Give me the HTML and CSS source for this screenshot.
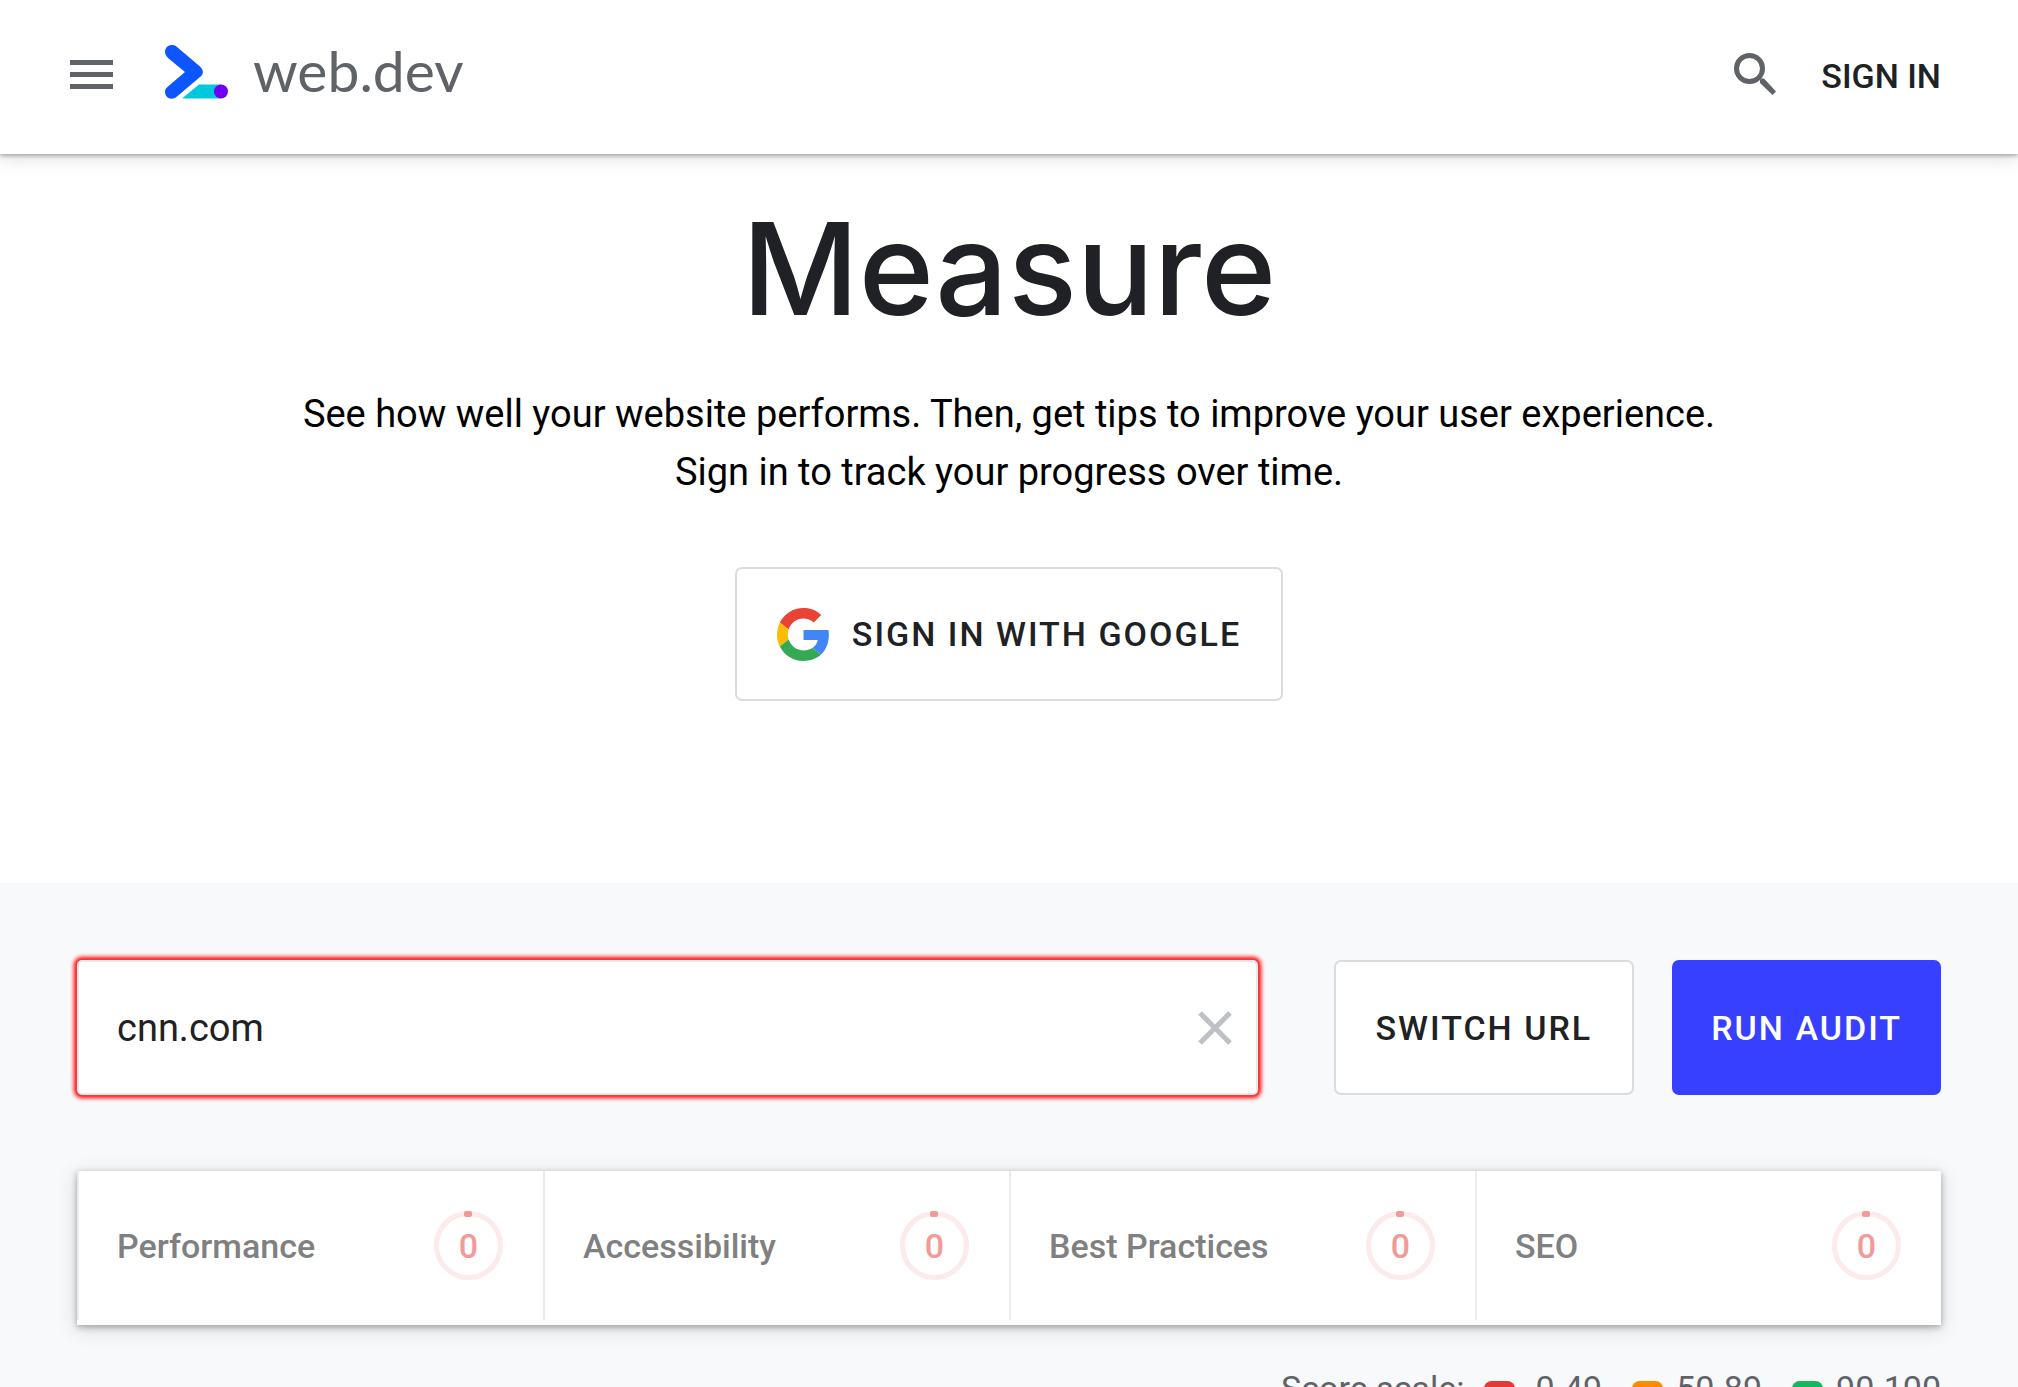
FILE: index.html
```html
<!DOCTYPE html>
<html lang="en">
<head>
<meta charset="utf-8">
<meta name="viewport" content="width=device-width, initial-scale=1">
<title>Measure</title>
<link rel="stylesheet" href="styles.css">
</head>
<body>
<header class="header">
  <button class="icon-button" type="button" aria-label="Open menu">
    <svg class="menu-icon" viewBox="0 0 43 29" aria-hidden="true"><path d="M0 0h43v5H0zM0 12h43v5H0zM0 24h43v5H0z"/></svg>
  </button>
  <a class="brand" href="/">
    <svg class="brand-mark" viewBox="0 0 63 54" aria-hidden="true">
      <path fill="#00c9db" d="M34 39.500H56V53.500H17z"/>
      <path fill="#0d56ff" d="M0 7C0 0 8 -2 12 2L35 21.500Q41 27 35 32L12 51.500C8 55.500 0 54 0 46.500Q0 43.500 3 41.500L20 27L3 13Q0 10.500 0 7z"/>
      <circle cx="56" cy="46.500" r="7" fill="#6e00f5"/>
    </svg>
    <span class="brand-name">web.dev</span>
  </a>
  <button class="icon-button" type="button" aria-label="Search">
    <svg class="search-icon" viewBox="0 0 42 42" aria-hidden="true"><circle cx="15.500" cy="15.500" r="13" fill="none" stroke="#5f6368" stroke-width="5"/><path d="M26 30v-3.500l1-1h3L42 38.500 38.500 42z"/></svg>
  </button>
  <a class="header-link" href="/signin">SIGN IN</a>
</header>
<main>
  <section class="hero">
    <h1 class="hero-title">Measure</h1>
    <p class="hero-text">See how well your website performs. Then, get tips to improve your user experience.<br>Sign in to track your progress over time.</p>
    <button class="button button-google" type="button">
      <svg class="google-icon" viewBox="0 0 48 48" aria-hidden="true">
        <path fill="#ea4335" d="M24 9.500c3.540 0 6.710 1.220 9.210 3.600l6.850-6.850C35.900 2.380 30.470 0 24 0 14.620 0 6.510 5.380 2.560 13.220l7.980 6.190C12.430 13.720 17.740 9.500 24 9.500z"/>
        <path fill="#4285f4" d="M46.980 24.550c0-1.570-.15-3.090-.38-4.550H24v9.020h12.940c-.58 2.960-2.260 5.480-4.780 7.180l7.730 6c4.510-4.180 7.090-10.360 7.090-17.650z"/>
        <path fill="#fbbc05" d="M10.530 28.590A14.500 14.500 0 0 1 9.770 24c0-1.600.27-3.140.76-4.590l-7.980-6.190A23.900 23.900 0 0 0 0 24c0 3.880.92 7.540 2.560 10.780z"/>
        <path fill="#34a853" d="M24 48c6.480 0 11.930-2.130 15.890-5.810l-7.730-6c-2.150 1.450-4.920 2.300-8.160 2.300-6.260 0-11.570-4.220-13.470-9.910l-7.980 6.190C6.510 42.620 14.620 48 24 48z"/>
      </svg>
      <span>SIGN IN WITH GOOGLE</span>
    </button>
  </section>
  <section class="measure">
    <form class="url-form">
      <div class="url-field">
        <input class="url-input" type="text" value="cnn.com" aria-label="Website URL">
        <button class="icon-button" type="button" aria-label="Clear URL">
          <svg class="clear-icon" viewBox="0 0 34 34" aria-hidden="true"><path d="M2 2L32 32M32 2L2 32"/></svg>
        </button>
      </div>
      <div class="url-actions">
        <button class="button" type="button">SWITCH URL</button>
        <button class="button button-primary" type="button">RUN AUDIT</button>
      </div>
    </form>
    <ul class="scores">
      <li class="score"><span class="score-name">Performance</span><span class="gauge">0</span></li>
      <li class="score"><span class="score-name">Accessibility</span><span class="gauge">0</span></li>
      <li class="score"><span class="score-name">Best Practices</span><span class="gauge">0</span></li>
      <li class="score"><span class="score-name">SEO</span><span class="gauge">0</span></li>
    </ul>
    <div class="scale">
      <span class="scale-title">Score scale:</span>
      <span class="scale-item scale-low">0-49</span>
      <span class="scale-item scale-mid">50-89</span>
      <span class="scale-item scale-high">90-100</span>
    </div>
  </section>
</main>
</body>
</html>
```
FILE: styles.css
```css
* {
  box-sizing: border-box;
}

body {
  margin: 0;
  height: 100vh;
  overflow: hidden;
  background: #fff;
  color: #202124;
  font-family: Roboto, "Liberation Sans", sans-serif;
}

button,
input {
  font: inherit;
  color: inherit;
}

.icon-button {
  display: flex;
  padding: 0;
  border: 0;
  background: none;
  cursor: pointer;
}

.header {
  position: relative;
  display: flex;
  align-items: center;
  height: 154px;
  padding: 0 77px 6px 70px;
  background: #fff;
  box-shadow: 0 2px 4px rgba(60, 64, 67, .4), 0 4px 18px rgba(60, 64, 67, .16);
}

.menu-icon {
  width: 43px;
  height: 29px;
  fill: #5f6368;
}

.brand {
  display: flex;
  align-items: center;
  gap: 25px;
  margin: 0 auto 4px 52px;
  color: #5f6368;
  text-decoration: none;
}

.brand-mark {
  width: 63px;
  height: 54px;
}

.brand-name {
  padding-bottom: 4px;
  font-family: Lato, sans-serif;
  font-size: 57px;
  line-height: 64px;
}

.search-icon {
  width: 42px;
  height: 42px;
  fill: #5f6368;
}

.header-link {
  margin-left: 45px;
  padding-top: 4px;
  color: #202124;
  font-size: 34px;
  font-weight: 500;
  line-height: 40px;
  text-decoration: none;
}

.hero {
  display: flex;
  flex-direction: column;
  align-items: center;
  padding: 38px 77px 182px;
  text-align: center;
}

.hero-title {
  margin: 0;
  font-family: Inter, sans-serif;
  font-size: 128px;
  font-weight: 500;
  line-height: 154px;
}

.hero-text {
  margin: 39px 0 66px;
  color: #000;
  font-size: 38px;
  line-height: 58px;
}

.button {
  display: flex;
  align-items: center;
  justify-content: center;
  height: 135px;
  padding: 0 40px;
  border: 2px solid #dadce0;
  border-radius: 7px;
  background: #fff;
  font-size: 34px;
  font-weight: 500;
  letter-spacing: 2px;
  white-space: nowrap;
  cursor: pointer;
}

.button-google {
  gap: 22px;
  height: 134px;
}

.google-icon {
  width: 53px;
  height: 53px;
}

.button-primary {
  padding: 0 39px;
  border: 0;
  background: #3740ff;
  color: #fff;
}

.measure {
  padding: 77px 77px 38px;
  background: #f8f9fb;
}

.url-form {
  display: flex;
  align-items: center;
  gap: 76px;
}

.url-field {
  display: flex;
  flex: 1;
  align-items: center;
  height: 135px;
  padding: 0 24px 0 38px;
  border: 2px solid #e8eaed;
  border-radius: 5px;
  background: #fff;
  box-shadow: 0 0 0 1px #f33, 0 0 4px 3px #f00;
}

.url-input {
  flex: 1;
  min-width: 0;
  height: 100%;
  padding: 0;
  border: 0;
  outline: 0;
  background: none;
  font-size: 38px;
}

.clear-icon {
  width: 34px;
  height: 34px;
  fill: none;
  stroke: #bdc1c6;
  stroke-width: 5;
}

.url-actions {
  display: flex;
  gap: 38px;
}

.scores {
  display: grid;
  grid-template-columns: repeat(4, 1fr);
  margin: 76px 0 37px;
  padding: 0 0 5px;
  list-style: none;
  background: #fff;
  box-shadow: 0 2px 6px rgba(60, 64, 67, .4), 0 4px 18px rgba(60, 64, 67, .2);
}

.score {
  display: flex;
  align-items: center;
  justify-content: space-between;
  height: 149px;
  padding: 0 40px 0 38px;
  border-left: 2px solid #ebebec;
}

.score-name {
  color: #808080;
  font-size: 34px;
  font-weight: 500;
}

.gauge {
  position: relative;
  display: flex;
  align-items: center;
  justify-content: center;
  width: 69px;
  height: 69px;
  border: 5px solid #fdeaea;
  border-radius: 50%;
  color: #f29a97;
  font-size: 34px;
  font-weight: 500;
}

.gauge::before {
  content: "";
  position: absolute;
  top: -5px;
  left: calc(50% - 5px);
  width: 8px;
  height: 6px;
  border-radius: 2px;
  background: #f29a97;
}

.scale {
  display: flex;
  align-items: center;
  justify-content: flex-end;
  gap: 30px;
  color: #5f6368;
  font-size: 34px;
  line-height: 52px;
}

.scale-title {
  margin-right: -10px;
}

.scale-item {
  display: flex;
  align-items: center;
  gap: 13px;
}

.scale-item::before {
  content: "";
  width: 31px;
  height: 15px;
  border-radius: 8px;
  background: currentColor;
}

.scale-low {
  gap: 20px;
}

.scale-low::before {
  background: #e53935;
}

.scale-mid::before {
  background: #fb8c00;
}

.scale-high::before {
  background: #18b663;
}
```
